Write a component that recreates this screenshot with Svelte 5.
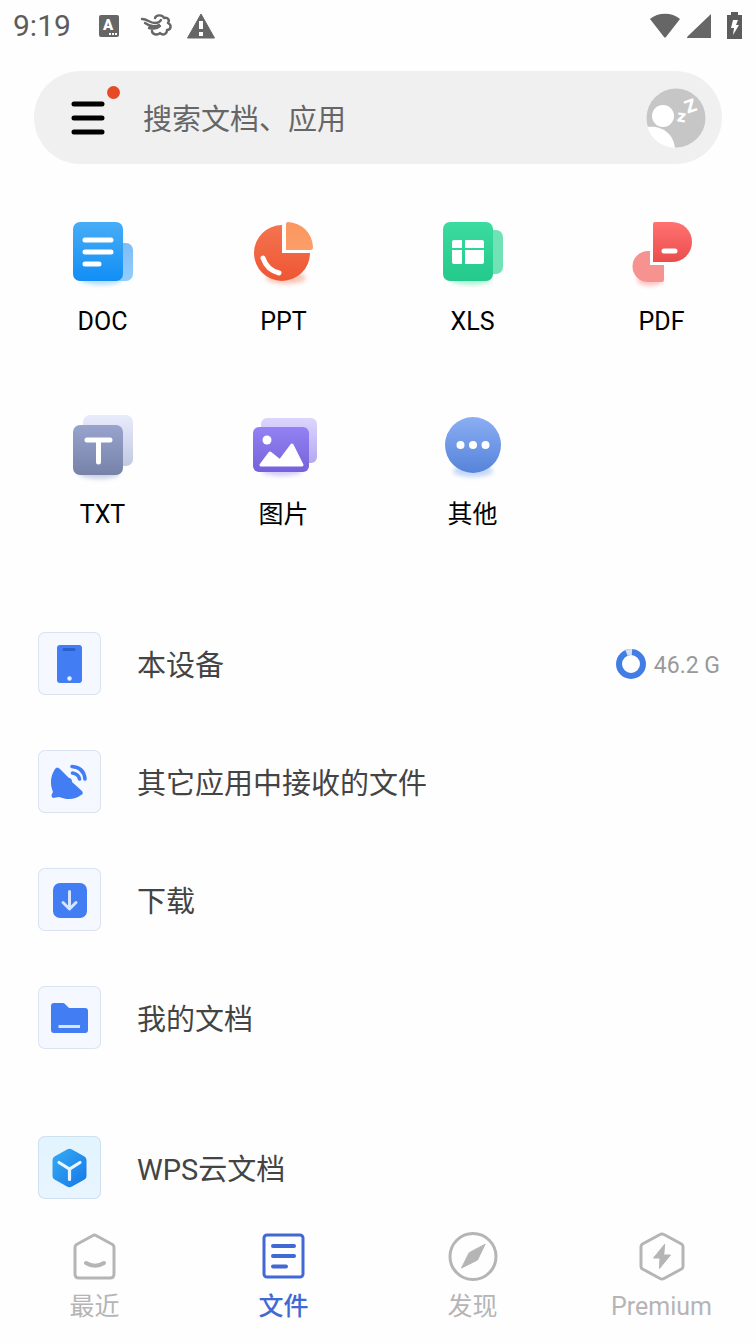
<script lang="ts">
  const apps = ['DOC', 'PPT', 'XLS', 'PDF', 'TXT', '图片', '其他'];

  const places = [
    { id: 'device', label: '本设备', size: '46.2 G' },
    { id: 'received', label: '其它应用中接收的文件' },
    { id: 'download', label: '下载' },
    { id: 'documents', label: '我的文档' },
    { id: 'cloud', label: 'WPS云文档' }
  ];

  const tabs = [
    { id: 'recent', label: '最近' },
    { id: 'files', label: '文件' },
    { id: 'discover', label: '发现' },
    { id: 'premium', label: 'Premium' }
  ];

  let active = $state('files');
  let query = $state('');
</script>

<div class="screen">
  <header class="status">
    <span class="time">9:19</span>
    <svg class="lang" width="20" height="22" viewBox="0 0 20 22">
      <rect width="20" height="22" rx="2" fill="#666" />
      <text x="9" y="15" text-anchor="middle" font-size="15" font-weight="900" fill="#fff">A</text>
      <path d="M10 19h2M13 19h2M16 19h2" stroke="#fff" stroke-width="2" />
    </svg>
    <svg class="wind" width="32" height="24" viewBox="0 0 32 24" fill="none" stroke="#666" stroke-width="2.400" stroke-linecap="round" stroke-linejoin="round">
      <path d="M1 5c6 0 7 4 13 4 3 0 5-1 6-3M4 9c4 3 8 5 14 2M8 14c4 1 8 1 11-2" />
      <path d="M14 4c1-3 7-4 9 0 4-1 6 2 4 5 4 2 3 7-1 7 0 4-4 6-7 3-3 3-8 1-8-2" />
    </svg>
    <svg class="warn" width="28" height="26" viewBox="0 0 28 26">
      <path d="M14 1 27.500 25H.5z" fill="#666" stroke="#666" stroke-linejoin="round" />
      <path d="M14 8v8M14 19v4" stroke="#fff" stroke-width="4" />
    </svg>
    <svg class="wifi" width="32" height="26" viewBox="0 0 32 26">
      <path d="M1 6C9-1 23-1 31 6L17 24q-1 1-2 0z" fill="#666" />
    </svg>
    <svg class="signal" width="24" height="26" viewBox="0 0 24 26">
      <path d="M24 1v24H1q-2 0 0-2z" fill="#666" />
    </svg>
    <svg class="battery" width="16" height="28" viewBox="0 0 16 28">
      <path d="M4 0h7v3h4v24H0V3h4z" fill="#5c5c5c" />
      <path d="M6 8h5l-2 5h3L6 23l1-7H4z" fill="#fff" />
    </svg>
  </header>

  <div class="search">
    <button class="menu" aria-label="菜单">
      <svg width="36" height="36" viewBox="0 0 36 36">
        <path d="M4 4h28M4 18h28M4 32h28" stroke="#000" stroke-width="5" stroke-linecap="round" />
      </svg>
      <span class="dot"></span>
    </button>
    <input type="text" placeholder="搜索文档、应用" aria-label="搜索文档、应用" bind:value={query} />
    <button class="avatar" aria-label="账号">
      <svg width="60" height="60" viewBox="0 0 60 60">
        <clipPath id="face"><circle cx="30" cy="30" r="30" /></clipPath>
        <circle cx="30" cy="30" r="29.500" fill="#c6c6c6" />
        <g clip-path="url(#face)" fill="#fff">
          <circle cx="17" cy="28" r="11" />
          <path d="M1 39c14-2 27 6 28 22H8z" />
        </g>
        <g fill="#fff" font-weight="900">
          <text x="39" y="24" font-size="18" transform="rotate(-20 45 18)">Z</text>
          <text x="31" y="34" font-size="17" transform="rotate(8 36 30)">z</text>
        </g>
      </svg>
    </button>
  </div>

  <svg class="defs" width="0" height="0" aria-hidden="true">
    <defs>
      <linearGradient id="blue" x2="0" y2="1"><stop stop-color="#47adf5" /><stop offset="1" stop-color="#128ef5" /></linearGradient>
      <linearGradient id="sky" x2="0" y2="1"><stop stop-color="#7dbdf5" /><stop offset="1" stop-color="#94cdfc" /></linearGradient>
      <linearGradient id="red" x2="0" y2="1"><stop stop-color="#f4744f" /><stop offset="1" stop-color="#ee5633" /></linearGradient>
      <linearGradient id="orange" x2="0" y2="1"><stop stop-color="#fb965f" /><stop offset="1" stop-color="#fb9e69" /></linearGradient>
      <linearGradient id="green" x2="0" y2="1"><stop stop-color="#3cdb9f" /><stop offset="1" stop-color="#24c98c" /></linearGradient>
      <linearGradient id="rose" x2="0" y2="1"><stop stop-color="#ff7272" /><stop offset="1" stop-color="#ea4d4b" /></linearGradient>
      <linearGradient id="slate" x2="0" y2="1"><stop stop-color="#98a4cd" /><stop offset="1" stop-color="#7682a8" /></linearGradient>
      <linearGradient id="mist" x2="0" y2="1"><stop stop-color="#e8ebfb" /><stop offset="1" stop-color="#c1c9e2" /></linearGradient>
      <linearGradient id="violet" x2="0" y2="1"><stop stop-color="#9382f3" /><stop offset="1" stop-color="#7562d9" /></linearGradient>
      <linearGradient id="lilac" x2="0" y2="1"><stop stop-color="#dcd6fd" /><stop offset="1" stop-color="#b5a8f2" /></linearGradient>
      <linearGradient id="azure" x2="0" y2="1"><stop stop-color="#8baef3" /><stop offset="1" stop-color="#5683da" /></linearGradient>
      <linearGradient id="cube" x2="1" y2="1"><stop stop-color="#35adf4" /><stop offset="1" stop-color="#1676e6" /></linearGradient>
      <filter id="soft" x="-50%" y="-100%" width="200%" height="300%"><feGaussianBlur stdDeviation="2" /></filter>
    </defs>
  </svg>

  <section class="apps">
    {#each apps as app}
      <button class="app">
        <svg width="64" height="72" viewBox="0 0 64 72" aria-hidden="true">
          {#if app === 'DOC'}
            <ellipse cx="30" cy="62" rx="20" ry="5" fill="#47adf5" opacity="0.400" filter="url(#soft)" />
            <rect x="29" y="25" width="33" height="38" rx="7" fill="url(#sky)" />
            <rect x="2" y="4" width="50" height="59" rx="7" fill="url(#blue)" />
            <path d="M14 22h26M14 34h26M14 46h14" stroke="#fff" stroke-width="5" stroke-linecap="round" />
          {:else if app === 'PPT'}
            <ellipse cx="34" cy="60" rx="20" ry="6" fill="#f4744f" opacity="0.400" filter="url(#soft)" />
            <path d="M30 7v28h28A28 28 0 1 1 30 7z" fill="url(#red)" />
            <path d="M34 6q0-2 2-2a26 26 0 0 1 25 25q0 3-2 3H34z" fill="url(#orange)" />
            <path d="M11 40q4 12 16 15" fill="none" stroke="#fff" stroke-width="5" stroke-linecap="round" />
          {:else if app === 'XLS'}
            <ellipse cx="30" cy="62" rx="20" ry="5" fill="#3cdb9f" opacity="0.400" filter="url(#soft)" />
            <rect x="32" y="12" width="30" height="44" rx="7" fill="#71e2b5" />
            <rect x="2" y="4" width="50" height="59" rx="7" fill="url(#green)" />
            <path d="M13 22h8v8H11v-6q0-2 2-2zM24 22h17q2 0 2 2v6H24zM11 32h10v14h-8q-2 0-2-2zM24 32h19v12q0 2-2 2H24z" fill="#fff" />
          {:else if app === 'PDF'}
            <ellipse cx="20" cy="62" rx="13" ry="6" fill="#ff7272" opacity="0.400" filter="url(#soft)" />
            <path d="M20 33v14h14v15q0 2-2 2H18a15 15 0 0 1 0-31z" fill="#f69391" />
            <path d="M23 6q0-2 2-2h17a20 20 0 0 1 0 40H23z" fill="url(#rose)" />
            <path d="M34 33h11" stroke="#fff" stroke-width="5" stroke-linecap="round" />
          {:else if app === 'TXT'}
            <ellipse cx="28" cy="63" rx="20" ry="5" fill="#98a4cd" opacity="0.500" filter="url(#soft)" />
            <rect x="12" y="4" width="50" height="51" rx="7" fill="url(#mist)" />
            <rect x="2" y="14" width="50" height="50" rx="7" fill="url(#slate)" />
            <path d="M16 29h23M27.500 29v22" stroke="#fff" stroke-width="5" stroke-linecap="round" />
          {:else if app === '图片'}
            <ellipse cx="30" cy="60" rx="20" ry="5" fill="#9382f3" opacity="0.400" filter="url(#soft)" />
            <rect x="9" y="7" width="56" height="45" rx="6" fill="url(#lilac)" />
            <rect x="1" y="16" width="56" height="45" rx="6" fill="url(#violet)" />
            <circle cx="15" cy="29" r="4.500" fill="#fff" />
            <path d="M9 54 18 42l10 8 12-16 10 20z" fill="#fff" stroke="#fff" stroke-width="3" stroke-linejoin="round" />
          {:else}
            <ellipse cx="32" cy="60" rx="20" ry="6" fill="#8baef3" opacity="0.500" filter="url(#soft)" />
            <circle cx="32" cy="34" r="28" fill="url(#azure)" />
            <g fill="#fff">
              <circle cx="19.500" cy="34" r="4" />
              <circle cx="32" cy="34" r="4" />
              <circle cx="44.500" cy="34" r="4" />
            </g>
          {/if}
        </svg>
        <span>{app}</span>
      </button>
    {/each}
  </section>

  <main class="places">
    {#each places as place}
      <button class="place {place.id}">
        <span class="tile">
          <svg width="63" height="63" viewBox="0 0 63 63" aria-hidden="true">
            {#if place.id === 'device'}
              <rect x="19" y="13" width="25" height="38" rx="3" fill="#427df4" />
              <path d="M26 17.500h10" stroke="#2a5fcd" stroke-width="3" stroke-linecap="round" />
              <circle cx="31.500" cy="46.500" r="2.200" fill="#e8f3ff" />
            {:else if place.id === 'received'}
              <path d="M17 19q2-3 5 0l9 9q3 0 3 4l10 9q2 3-1 4c-6 5-14 5-22 2l-6 1q-3-2 0-6c-3-8-3-15 2-23z" fill="#427df4" />
              <path d="M34 16.500q12 1 13 12.500M34.500 23q6 1 7 6" fill="none" stroke="#427df4" stroke-width="3.600" stroke-linecap="round" />
            {:else if place.id === 'download'}
              <rect x="15" y="15" width="34" height="35" rx="7" fill="#427df4" />
              <path d="M31.500 23.500V40M25 34.500l6.500 6.500 6.500-6.500" fill="none" stroke="#d5e6ff" stroke-width="3" stroke-linecap="round" stroke-linejoin="round" />
            {:else if place.id === 'documents'}
              <path d="M16 17h9q1 0 2 1l4 4h16q3 0 3 3v19q0 3-3 3H16q-3 0-3-3V20q0-3 3-3z" fill="#427df4" />
              <path d="M20.500 40.500H42" stroke="#d5e6ff" stroke-width="3" />
            {:else}
              <path d="M29 13.500q2.500-1.500 5 0l12.500 7q2 1 2 3.500v16q0 2.500-2 3.500L34 50.500q-2.500 1.500-5 0l-12.500-7q-2-1-2-3.500V24q0-2.500 2-3.500z" fill="url(#cube)" />
              <path d="M21 26.500 31.500 33 42 26.500M31.500 33v10.500" fill="none" stroke="#e8f6ff" stroke-width="3.200" stroke-linecap="round" />
            {/if}
          </svg>
        </span>
        <span class="label">{place.label}</span>
        {#if place.size}
          <svg class="ring" width="30" height="30" viewBox="0 0 30 30" fill="none" stroke-width="6" aria-hidden="true">
            <circle cx="15" cy="15" r="12" stroke="#427de6" />
            <path d="M10.500 3.900A12 12 0 0 1 16 3" stroke="#d6def0" />
          </svg>
          <span class="size">{place.size}</span>
        {/if}
      </button>
    {/each}
  </main>

  <nav>
    {#each tabs as tab}
      <button class:active={active === tab.id} onclick={() => (active = tab.id)}>
        <svg width="52" height="52" viewBox="0 0 52 52" fill="none" stroke="currentColor" stroke-width="3" stroke-linecap="round" stroke-linejoin="round" aria-hidden="true">
          {#if tab.id === 'recent'}
            <path d="M24 5.500q1.500-1 3 0L43.500 14.500q1.500 1 1.500 3V44q0 4-4 4H10q-4 0-4-4V17.500q0-2 1.500-3z" />
            <path d="M17 33q9 5.500 18 0" stroke-width="4" />
          {:else if tab.id === 'files'}
            <rect x="6" y="5" width="39" height="42" rx="3" />
            <path d="M15 16h21M15 26h21M15 36.500h13" stroke-width="4" />
          {:else if tab.id === 'discover'}
            <circle cx="26" cy="26.500" r="23" />
            <path d="M38 14.500 30.500 30 14.500 38 22 23z" fill="currentColor" stroke-width="1" />
          {:else}
            <path d="M24 4.500q2-1.200 4 0L45.500 14q1.500 1 1.500 2.500v20q0 1.500-1.500 2.500L28 48.500q-2 1.200-4 0L6.500 39Q5 38 5 36.500v-20Q5 15 6.500 14z" />
            <path d="M28.500 14.500 17.500 28H24l-.5 10.500L34.500 25H28z" fill="currentColor" stroke-width="1" />
          {/if}
        </svg>
        <span>{tab.label}</span>
      </button>
    {/each}
  </nav>
</div>

<style>
  :global(body) {
    margin: 0;
    background: #fefefe;
  }

  .screen {
    display: flex;
    flex-direction: column;
    min-height: 100vh;
    font-family: Roboto, 'Noto Sans CJK SC', sans-serif;
    color: #000;
  }

  svg {
    display: block;
    flex: none;
    overflow: visible;
  }

  .defs {
    position: absolute;
  }

  button {
    padding: 0;
    border: 0;
    background: none;
    font: inherit;
    color: inherit;
    cursor: pointer;
  }

  .status {
    display: flex;
    align-items: center;
    height: 51px;
    padding: 0 13px;
  }

  .time {
    font-size: 30px;
    line-height: 36px;
    color: #5c5c5c;
  }

  .lang {
    margin-left: 28px;
  }

  .wind {
    margin-left: 22px;
  }

  .warn {
    margin-left: 14px;
  }

  .wifi {
    margin-left: auto;
  }

  .signal {
    margin-left: 6px;
  }

  .battery {
    margin-left: 16px;
  }

  /* Search bar */
  .search {
    display: flex;
    align-items: center;
    height: 93px;
    margin: 20px 34px 0;
    padding: 0 16px 0 36px;
    box-sizing: border-box;
    border-radius: 47px;
    background: #f0f0f0;
  }

  .menu {
    position: relative;
  }

  .dot {
    position: absolute;
    top: -14px;
    right: -14px;
    width: 13px;
    height: 13px;
    border-radius: 50%;
    background: #e84a26;
  }

  .search input {
    flex: 1;
    min-width: 0;
    margin: 0 20px 0 37px;
    padding: 4px 0 0;
    border: 0;
    outline: none;
    background: none;
    font: inherit;
    font-size: 29px;
    line-height: 44px;
    color: #333;
  }

  .search input::placeholder {
    color: #666;
    opacity: 1;
  }

  /* File type shortcuts */
  .apps {
    display: grid;
    grid-template-columns: repeat(4, 1fr);
    row-gap: 71px;
    padding-top: 54px;
  }

  .app {
    display: flex;
    flex-direction: column;
    align-items: center;
    gap: 14px;
    font-size: 25px;
    line-height: 36px;
  }

  .app:nth-child(4n + 1) {
    padding-left: 16px;
  }

  /* Locations */
  .places {
    display: flex;
    flex-direction: column;
    gap: 55px;
    padding: 99px 36px 16px 38px;
  }

  .place {
    display: flex;
    align-items: center;
    color: #444;
    text-align: left;
  }

  .cloud {
    margin-top: 32px;
  }

  .tile {
    border-radius: 7px;
    background: #f5f9ff;
    box-shadow: inset 0 0 0 1px #dbe3f1;
  }

  .cloud .tile {
    background: linear-gradient(#e2f4fe, #e9f4fe);
    box-shadow: inset 0 0 0 1px #cfe1f0;
  }

  .label {
    flex: 1;
    margin-left: 36px;
    padding-top: 4px;
    font-size: 29px;
    line-height: 44px;
  }

  .size {
    margin-left: 8px;
    padding-top: 4px;
    font-size: 23px;
    line-height: 32px;
    color: #999;
  }

  /* Bottom tabs */
  nav {
    position: sticky;
    bottom: 0;
    display: grid;
    grid-template-columns: repeat(4, 1fr);
    margin-top: auto;
    padding: 14px 0 22px;
    background: #fefefe;
  }

  nav button {
    display: flex;
    flex-direction: column;
    align-items: center;
    gap: 10px;
    font-size: 25px;
    line-height: 30px;
    color: #b5b5b5;
  }

  nav .active {
    color: #4169d4;
  }

  nav .active span {
    font-weight: 500;
  }
</style>
